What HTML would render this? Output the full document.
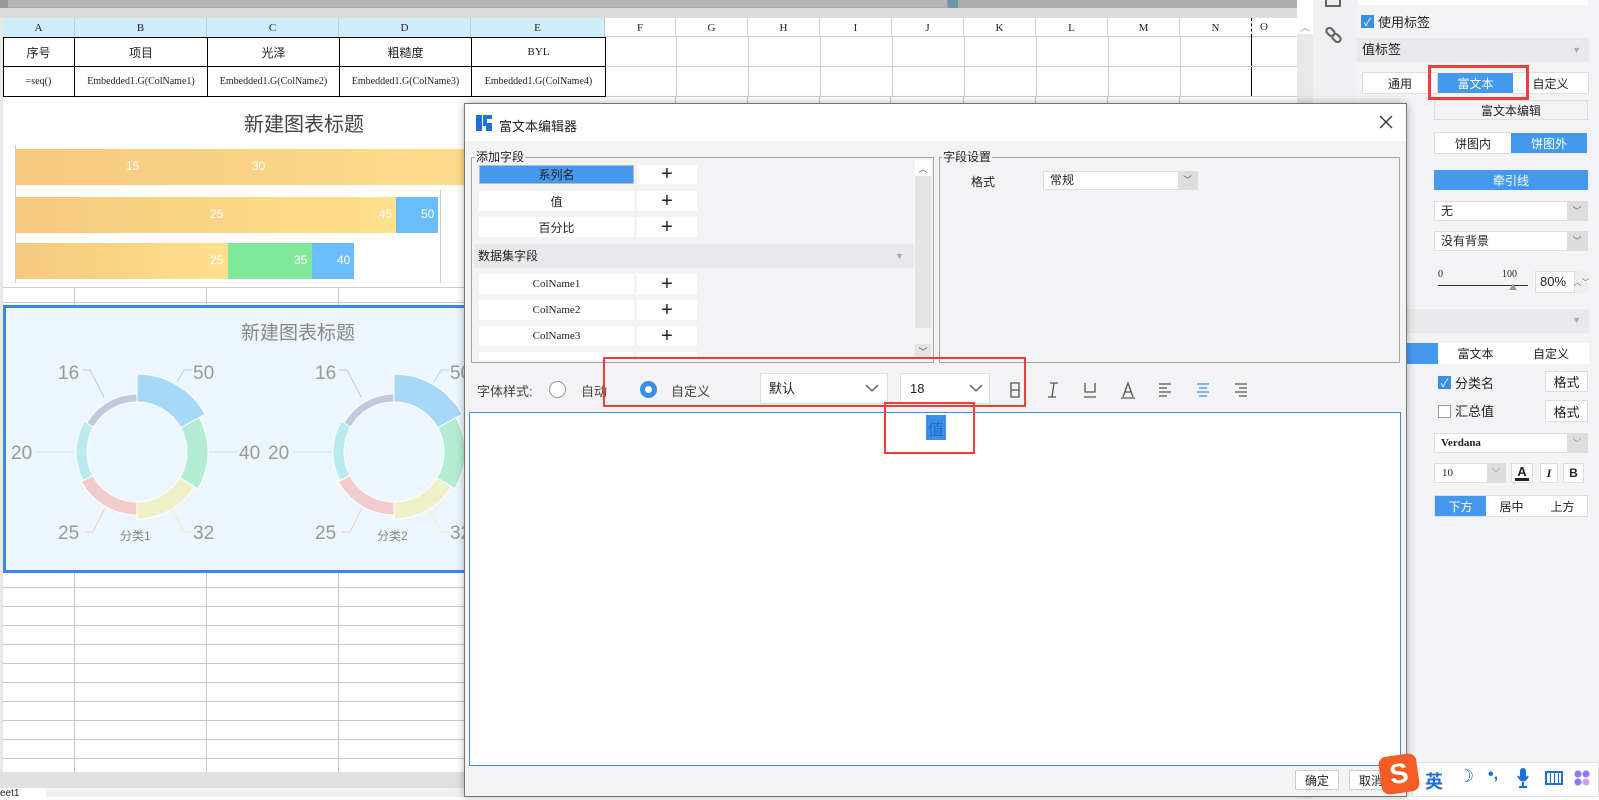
<!DOCTYPE html>
<html><head><meta charset="utf-8"><style>
*{box-sizing:border-box;margin:0;padding:0}
body{width:1599px;height:797px;overflow:hidden;background:#fff;position:relative;font-family:"Liberation Sans","Noto Sans CJK SC",sans-serif;font-size:12px;color:#222}
.a{position:absolute}
.c{display:flex;align-items:center;justify-content:center}
.mono{font-family:"Liberation Serif","Noto Serif CJK SC",serif}
.btn{background:#fff;border:1px solid #ddd}
.blue{background:#4499ee;color:#fff}
</style></head><body>
<div class="a" style="left:0;top:0;width:1297px;height:8px;background:#ababab"></div>
<div class="a" style="left:0;top:0;width:8px;height:8px;background:#999"></div>
<div class="a" style="left:8px;top:0;width:940px;height:7px;background:#b5b5b5;border-right:1px solid #999"></div>
<div class="a" style="left:948px;top:0;width:10px;height:8px;background:#6a9aa8"></div>
<div class="a" style="left:0;top:8px;width:1297px;height:10px;background:#dcdcdc"></div>
<div class="a" style="left:3px;top:96px;width:1294px;height:676px;background-image:repeating-linear-gradient(to bottom,transparent 0 18px,#c8c8c8 18px 19px),linear-gradient(to right,transparent 0 71px,#c8c8c8 71px 72px,transparent 72px 203px,#c8c8c8 203px 204px,transparent 204px 335px,#c8c8c8 335px 336px,transparent 336px 601px,#c8c8c8 601px 602px,transparent 602px 672px,#c8c8c8 672px 673px,transparent 673px 744px,#c8c8c8 744px 745px,transparent 745px 816px,#c8c8c8 816px 817px,transparent 817px 887px,#c8c8c8 887px 888px,transparent 888px 960px,#c8c8c8 960px 961px,transparent 961px 1032px,#c8c8c8 1032px 1033px,transparent 1033px 1104px,#c8c8c8 1104px 1105px,transparent 1105px 1176px,#c8c8c8 1176px 1177px,transparent 1177px);background-position:0 -2px,0 0"></div>
<div class="a" style="left:0;top:18px;width:3px;height:754px;background:#e8e8e8"></div>
<div class="a mono" style="left:3px;top:18px;width:1294px;height:19px;background:#d0eefa;font-size:11px">
<div class="a c" style="left:0;width:72px;height:19px;border-right:1px solid #bcd">A</div>
<div class="a c" style="left:72px;width:132px;height:19px;border-right:1px solid #bcd">B</div>
<div class="a c" style="left:204px;width:132px;height:19px;border-right:1px solid #bcd">C</div>
<div class="a c" style="left:336px;width:132px;height:19px;border-right:1px solid #bcd">D</div>
<div class="a c" style="left:468px;width:134px;height:19px;border-right:1px solid #bcd">E</div>
</div>
<div class="a mono" style="left:605px;top:18px;width:692px;height:19px;background:#fff;font-size:11px;border-bottom:1px solid #ccc">
<div class="a c" style="left:0;width:71px;height:19px;border-right:1px solid #ccc">F</div>
<div class="a c" style="left:71px;width:72px;height:19px;border-right:1px solid #ccc">G</div>
<div class="a c" style="left:143px;width:72px;height:19px;border-right:1px solid #ccc">H</div>
<div class="a c" style="left:215px;width:72px;height:19px;border-right:1px solid #ccc">I</div>
<div class="a c" style="left:287px;width:72px;height:19px;border-right:1px solid #ccc">J</div>
<div class="a c" style="left:359px;width:72px;height:19px;border-right:1px solid #ccc">K</div>
<div class="a c" style="left:431px;width:72px;height:19px;border-right:1px solid #ccc">L</div>
<div class="a c" style="left:503px;width:72px;height:19px;border-right:1px solid #ccc">M</div>
<div class="a c" style="left:575px;width:72px;height:19px;border-right:1px dashed #000">N</div>
<div class="a" style="left:655px;top:3px">O</div>
</div>
<div class="a" style="left:3px;top:37px;width:602px;height:60px;border:1px solid #000;border-right:none;background:#fff"></div>
<div class="a" style="left:3px;top:66px;width:602px;height:1px;background:#000"></div>
<div class="a" style="left:605px;top:37px;width:692px;height:60px;background-image:linear-gradient(to right,transparent 0 71px,#ccc 71px 72px,transparent 72px 143px,#ccc 143px 144px,transparent 144px 215px,#ccc 215px 216px,transparent 216px 287px,#ccc 287px 288px,transparent 288px 359px,#ccc 359px 360px,transparent 360px 431px,#ccc 431px 432px,transparent 432px 503px,#ccc 503px 504px,transparent 504px 575px,#ccc 575px 576px,transparent 576px 646px,#000 646px 647px,transparent 647px);border-bottom:1px solid #ccc"></div>
<div class="a" style="left:605px;top:66px;width:692px;height:1px;background:#ccc"></div>
<div class="a" style="left:74px;top:37px;width:1px;height:60px;background:#000"></div>
<div class="a" style="left:207px;top:37px;width:1px;height:60px;background:#000"></div>
<div class="a" style="left:339px;top:37px;width:1px;height:60px;background:#000"></div>
<div class="a" style="left:471px;top:37px;width:1px;height:60px;background:#000"></div>
<div class="a" style="left:605px;top:37px;width:1px;height:60px;background:#000"></div>
<div class="a c" style="left:3px;top:38px;width:71px;height:28px;font-size:12px">序号</div>
<div class="a c" style="left:75px;top:38px;width:132px;height:28px">项目</div>
<div class="a c" style="left:208px;top:38px;width:131px;height:28px">光泽</div>
<div class="a c" style="left:340px;top:38px;width:131px;height:28px">粗糙度</div>
<div class="a c mono" style="left:472px;top:38px;width:133px;height:28px;font-size:11px">BYL</div>
<div class="a c mono" style="left:3px;top:67px;width:71px;height:29px;font-size:10px">=seq()</div>
<div class="a c mono" style="left:75px;top:67px;width:132px;height:29px;font-size:10px">Embedded1.G(ColName1)</div>
<div class="a c mono" style="left:208px;top:67px;width:131px;height:29px;font-size:10px">Embedded1.G(ColName2)</div>
<div class="a c mono" style="left:340px;top:67px;width:131px;height:29px;font-size:10px">Embedded1.G(ColName3)</div>
<div class="a c mono" style="left:472px;top:67px;width:133px;height:29px;font-size:10px">Embedded1.G(ColName4)</div>
<div class="a" style="left:3px;top:98px;width:602px;height:190px;background:#fff;border-bottom:1px solid #ccc"></div>
<div class="a" style="left:244px;top:108px;font-size:20px;color:#444">新建图表标题</div>
<div class="a" style="left:15px;top:145px;width:1px;height:138px;background:#ccc"></div>
<div class="a" style="left:440px;top:190px;width:1px;height:93px;background:#ccc"></div>
<div class="a" style="left:16px;top:149px;width:460px;height:36px;background:linear-gradient(to right,#f6c97e,#fddc8c)"></div>
<div class="a" style="left:16px;top:197px;width:380px;height:36px;background:linear-gradient(to right,#f6c97e,#fde08c)"></div>
<div class="a" style="left:396px;top:197px;width:42px;height:36px;background:#6cbdfc"></div>
<div class="a" style="left:16px;top:243px;width:212px;height:36px;background:linear-gradient(to right,#f6c97e,#fde08c)"></div>
<div class="a" style="left:228px;top:243px;width:84px;height:36px;background:#80e89b"></div>
<div class="a" style="left:312px;top:243px;width:42px;height:36px;background:#6cbdfc"></div>
<div class="a" style="color:#fff;font-size:12px;left:126px;top:159px">15</div>
<div class="a" style="color:#fff;font-size:12px;left:252px;top:159px">30</div>
<div class="a" style="color:#fff;font-size:12px;left:210px;top:207px">25</div>
<div class="a" style="color:#fff;font-size:12px;left:379px;top:207px">45</div>
<div class="a" style="color:#fff;font-size:12px;left:421px;top:207px">50</div>
<div class="a" style="color:#fff;font-size:12px;left:210px;top:253px">25</div>
<div class="a" style="color:#fff;font-size:12px;left:294px;top:253px">35</div>
<div class="a" style="color:#fff;font-size:12px;left:337px;top:253px">40</div>
<div class="a" style="left:3px;top:305px;width:470px;height:268px;background:#edf5fd;border:3px solid #3b87e8;border-right:none"></div>
<div class="a" style="left:241px;top:318px;font-size:19px;color:#888">新建图表标题</div>
<svg class="a" style="left:0;top:300px" width="470" height="270">
<g transform="translate(137,152)" stroke="#fff" stroke-width="1">
<path d="M0 -78 A78 78 0 0 1 68.2 -37.8 L43.7 -24.2 A50 50 0 0 0 0 -50Z" fill="#a6d8f8"/>
<path d="M62.1 -34.4 A71 71 0 0 1 60.9 36.6 L42.9 25.8 A50 50 0 0 0 43.7 -24.2Z" fill="#b2ecd2"/>
<path d="M57.4 34.5 A67 67 0 0 1 0 67 L0 50 A50 50 0 0 0 42.9 25.8Z" fill="#eef0c8"/>
<path d="M0 63 A63 63 0 0 1 -55.6 29.6 L-44.1 23.5 A50 50 0 0 0 0 50Z" fill="#f0cccc"/>
<path d="M-53.9 28.6 A61 61 0 0 1 -52.8 -30.5 L-43.3 -25 A50 50 0 0 0 -44.1 23.5Z" fill="#b8eaf0"/>
<path d="M-50.2 -29 A58 58 0 0 1 0 -58 L0 -50 A50 50 0 0 0 -43.3 -25Z" fill="#c4c8de"/>
<g fill="none" stroke-width="1">
<path d="M40 -70 L47 -82 L55 -82" stroke="#a6d8f8"/>
<path d="M-33 -55 L-47 -82 L-55 -82" stroke="#c4c8de"/>
<path d="M-63 0 L-100 0" stroke="#b8eaf0"/>
<path d="M72 0 L100 0" stroke="#b2ecd2"/>
<path d="M-32 56 L-44 80 L-52 80" stroke="#f0cccc"/>
<path d="M35 57 L47 80 L55 80" stroke="#eef0c8"/>
</g>
</g>
<g transform="translate(394,152)" stroke="#fff" stroke-width="1">
<path d="M0 -78 A78 78 0 0 1 68.2 -37.8 L43.7 -24.2 A50 50 0 0 0 0 -50Z" fill="#a6d8f8"/>
<path d="M62.1 -34.4 A71 71 0 0 1 60.9 36.6 L42.9 25.8 A50 50 0 0 0 43.7 -24.2Z" fill="#b2ecd2"/>
<path d="M57.4 34.5 A67 67 0 0 1 0 67 L0 50 A50 50 0 0 0 42.9 25.8Z" fill="#eef0c8"/>
<path d="M0 63 A63 63 0 0 1 -55.6 29.6 L-44.1 23.5 A50 50 0 0 0 0 50Z" fill="#f0cccc"/>
<path d="M-53.9 28.6 A61 61 0 0 1 -52.8 -30.5 L-43.3 -25 A50 50 0 0 0 -44.1 23.5Z" fill="#b8eaf0"/>
<path d="M-50.2 -29 A58 58 0 0 1 0 -58 L0 -50 A50 50 0 0 0 -43.3 -25Z" fill="#c4c8de"/>
<g fill="none">
<path d="M40 -70 L47 -82 L55 -82" stroke="#a6d8f8"/>
<path d="M-33 -55 L-47 -82 L-55 -82" stroke="#c4c8de"/>
<path d="M-63 0 L-100 0" stroke="#b8eaf0"/>
<path d="M-32 56 L-44 80 L-52 80" stroke="#f0cccc"/>
<path d="M35 57 L47 80 L55 80" stroke="#eef0c8"/>
</g>
</g>
<g fill="#999" font-size="19" font-family="Liberation Sans,sans-serif">
<text x="58" y="79">16</text><text x="193" y="79">50</text><text x="11" y="159">20</text><text x="239" y="159">40</text><text x="58" y="239">25</text><text x="193" y="239">32</text>
<text x="315" y="79">16</text><text x="450" y="79">50</text><text x="268" y="159">20</text><text x="315" y="239">25</text><text x="450" y="239">32</text>
</g>
<g fill="#888" font-size="12" font-family="Liberation Sans,Noto Sans CJK SC,sans-serif"><text x="120" y="240">分类1</text><text x="377" y="240">分类2</text></g>
</svg>
<div class="a" style="left:0;top:772px;width:1297px;height:16px;background:#e0e0e0"></div>
<div class="a" style="left:0;top:788px;width:1297px;height:9px;background:#f0f0f0"></div>
<div class="a" style="left:0;top:788px;width:46px;height:9px;background:#fff;font-size:10px;line-height:12px">eet1</div>
<div class="a" style="left:1297px;top:18px;width:16px;height:780px;background:#e8e8e8"></div>
<div class="a c" style="left:1297px;top:18px;width:16px;height:16px;background:#fff;color:#888;font-size:10px">︿</div>
<div class="a" style="left:1313px;top:0;width:44px;height:797px;background:#f0f0f2"></div>
<div class="a" style="left:1325px;top:0;width:16px;height:7px;border:2px solid #666;border-top:none"></div>
<svg class="a" style="left:1325px;top:26px" width="18" height="18"><g fill="none" stroke="#666" stroke-width="2.2"><rect x="1" y="3" width="9" height="6" rx="3" transform="rotate(45 5.5 6)"/><rect x="7" y="9" width="9" height="6" rx="3" transform="rotate(45 11.5 12)"/></g></svg>
<div class="a" style="left:1357px;top:0;width:242px;height:797px;background:#f3f3f5"></div>
<div class="a" style="left:1358px;top:0;width:230px;height:5px;background:#fff"></div>
<div class="a c" style="left:1361px;top:15px;width:13px;height:13px;background:#3a8ee6;color:#fff;font-size:11px">✓</div>
<div class="a" style="left:1378px;top:12px;font-size:13px">使用标签</div>
<div class="a" style="left:1357px;top:38px;width:232px;height:24px;background:#e9e9eb;font-size:13px;line-height:24px;padding-left:5px">值标签<span style="position:absolute;right:8px;color:#aaa;font-size:9px">▼</span></div>
<div class="a c btn" style="left:1362px;top:72px;width:76px;height:22px;font-size:12px">通用</div>
<div class="a c blue" style="left:1438px;top:73px;width:75px;height:20px;font-size:12px">富文本</div>
<div class="a c btn" style="left:1513px;top:72px;width:76px;height:22px;font-size:12px;border-left:none">自定义</div>
<div class="a" style="left:1428px;top:65px;width:101px;height:35px;border:3px solid #f03c3c"></div>
<div class="a c btn" style="left:1434px;top:100px;width:154px;height:20px;background:#f3f3f5">富文本编辑</div>
<div class="a c btn" style="left:1434px;top:132px;width:78px;height:22px">饼图内</div>
<div class="a c blue" style="left:1511px;top:133px;width:76px;height:20px">饼图外</div>
<div class="a c blue" style="left:1434px;top:170px;width:154px;height:20px">牵引线</div>
<div class="a btn" style="left:1434px;top:201px;width:154px;height:20px;padding-left:6px;line-height:18px">无<span class="a c" style="right:0;top:0;width:20px;height:18px;background:#ddd;color:#666;font-size:9px">﹀</span></div>
<div class="a btn" style="left:1434px;top:231px;width:154px;height:20px;padding-left:6px;line-height:18px">没有背景<span class="a c" style="right:0;top:0;width:20px;height:18px;background:#ddd;color:#666;font-size:9px">﹀</span></div>
<div class="a mono" style="left:1438px;top:269px;font-size:10px">0</div>
<div class="a mono" style="left:1502px;top:269px;font-size:10px">100</div>
<div class="a" style="left:1438px;top:285px;width:90px;height:1px;background:#333"></div>
<div class="a" style="left:1509px;top:280px;width:0;height:0;border:4px solid transparent;border-bottom:6px solid #999"></div>
<div class="a btn" style="left:1535px;top:271px;width:40px;height:22px;font-size:13px;padding-left:4px;line-height:20px">80%</div>
<div class="a c" style="left:1575px;top:271px;width:13px;height:22px;font-size:8px;color:#666;background:#eee;flex-direction:column">︿﹀</div>
<div class="a" style="left:1357px;top:309px;width:232px;height:24px;background:#e9e9eb"><span style="position:absolute;right:8px;top:6px;color:#aaa;font-size:9px">▼</span></div>
<div class="a blue" style="left:1407px;top:343px;width:31px;height:21px"></div>
<div class="a c" style="left:1438px;top:343px;width:75px;height:21px;background:#fff">富文本</div>
<div class="a c" style="left:1513px;top:343px;width:76px;height:21px;background:#fff">自定义</div>
<div class="a c" style="left:1438px;top:376px;width:13px;height:13px;background:#3a8ee6;color:#fff;font-size:11px">✓</div>
<div class="a" style="left:1455px;top:373px;font-size:13px">分类名</div>
<div class="a c btn" style="left:1545px;top:371px;width:43px;height:21px;font-size:13px">格式</div>
<div class="a" style="left:1438px;top:405px;width:13px;height:13px;border:1px solid #999;background:#fff"></div>
<div class="a" style="left:1455px;top:401px;font-size:13px">汇总值</div>
<div class="a c btn" style="left:1545px;top:400px;width:43px;height:22px;font-size:13px">格式</div>
<div class="a btn mono" style="left:1434px;top:433px;width:154px;height:20px;padding-left:6px;line-height:18px;font-size:11px;font-weight:bold">Verdana<span class="a c" style="right:0;top:0;width:20px;height:18px;background:#ddd;color:#666;font-size:9px;font-weight:normal">﹀</span></div>
<div class="a btn mono" style="left:1434px;top:463px;width:72px;height:20px;padding-left:7px;line-height:18px;font-size:11px">10<span class="a c" style="right:0;top:0;width:18px;height:18px;background:#ddd;color:#666;font-size:9px">﹀</span></div>
<div class="a c btn" style="left:1511px;top:463px;width:22px;height:20px;font-weight:bold;font-size:13px;flex-direction:column;line-height:12px">A<span style="width:14px;height:3px;background:#222"></span></div>
<div class="a c btn" style="left:1540px;top:463px;width:18px;height:20px;font-style:italic;font-family:'Liberation Serif';font-weight:bold">I</div>
<div class="a c btn" style="left:1563px;top:463px;width:21px;height:20px;font-weight:bold">B</div>
<div class="a" style="left:1434px;top:495px;width:154px;height:22px;background:#fff;border:1px solid #ddd"></div>
<div class="a c blue" style="left:1435px;top:496px;width:51px;height:20px">下方</div>
<div class="a c" style="left:1486px;top:496px;width:51px;height:20px">居中</div>
<div class="a c" style="left:1537px;top:496px;width:51px;height:20px">上方</div>
<div class="a" style="left:464px;top:103px;width:943px;height:694px;background:#f3f3f5;border:1px solid #777;box-shadow:0 0 8px rgba(0,0,0,.3)"></div>
<div class="a" style="left:465px;top:104px;width:941px;height:37px;background:#fff"></div>
<svg class="a" style="left:476px;top:114px" width="16" height="17"><path d="M0 1 H6 V17 H0Z M7 1 H16 V5 H11 V9 H16 V17 H10 V12 H7Z" fill="#1a73d9"/></svg>
<div class="a" style="left:499px;top:116px;font-size:13px">富文本编辑器</div>
<svg class="a" style="left:1379px;top:115px" width="14" height="14"><path d="M1 1L13 13M13 1L1 13" stroke="#333" stroke-width="1.3"/></svg>
<div class="a" style="left:471px;top:157px;width:463px;height:206px;border:1px solid #aaa59a"></div>
<div class="a" style="left:475px;top:148px;background:#f3f3f5;font-size:12px;padding:0 1px">添加字段</div>
<div class="a c" style="left:479px;top:165px;width:155px;height:19px;background:#4499ee;border:1px solid #bbb;font-size:12px">系列名</div>
<div class="a c" style="left:479px;top:191px;width:155px;height:20px;background:#fff">值</div>
<div class="a c" style="left:479px;top:217px;width:155px;height:20px;background:#fff">百分比</div>
<div class="a" style="left:474px;top:244px;width:440px;height:24px;background:#e9e9eb;padding-left:4px;line-height:24px">数据集字段<span style="position:absolute;right:10px;color:#aaa;font-size:9px">▼</span></div>
<div class="a c mono" style="left:479px;top:274px;width:155px;height:20px;background:#fff;font-size:11px">ColName1</div>
<div class="a c mono" style="left:479px;top:300px;width:155px;height:20px;background:#fff;font-size:11px">ColName2</div>
<div class="a c mono" style="left:479px;top:326px;width:155px;height:20px;background:#fff;font-size:11px">ColName3</div>
<div class="a" style="left:479px;top:352px;width:155px;height:8px;background:#fff"></div>
<div class="a" style="left:637px;top:352px;width:60px;height:8px;background:#fff"></div>
<div class="a c" style="left:637px;top:165px;width:60px;height:19px;background:#fff;font-size:20px">+</div>
<div class="a c" style="left:637px;top:191px;width:60px;height:20px;background:#fff;font-size:20px">+</div>
<div class="a c" style="left:637px;top:217px;width:60px;height:20px;background:#fff;font-size:20px">+</div>
<div class="a c" style="left:637px;top:274px;width:60px;height:20px;background:#fff;font-size:20px">+</div>
<div class="a c" style="left:637px;top:300px;width:60px;height:20px;background:#fff;font-size:20px">+</div>
<div class="a c" style="left:637px;top:326px;width:60px;height:20px;background:#fff;font-size:20px">+</div>
<div class="a" style="left:915px;top:160px;width:16px;height:198px;background:#e4e4e4"></div>
<div class="a c" style="left:915px;top:160px;width:16px;height:16px;background:#fff;font-size:9px;color:#555">︿</div>
<div class="a" style="left:915px;top:328px;width:16px;height:16px;background:#f3f3f0"></div>
<div class="a c" style="left:915px;top:344px;width:16px;height:14px;font-size:9px;color:#555">﹀</div>
<div class="a" style="left:939px;top:157px;width:461px;height:206px;border:1px solid #aaa59a"></div>
<div class="a" style="left:942px;top:148px;background:#f3f3f5;font-size:12px;padding:0 1px">字段设置</div>
<div class="a" style="left:971px;top:173px">格式</div>
<div class="a btn" style="left:1043px;top:171px;width:155px;height:19px;padding-left:6px;line-height:17px">常规<span class="a c" style="right:0;top:0;width:19px;height:17px;background:#ddd;color:#666;font-size:9px">﹀</span></div>
<div class="a" style="left:477px;top:381px;font-size:13px;color:#444">字体样式:</div>
<div class="a" style="left:549px;top:381px;width:17px;height:17px;border:1px solid #999;border-radius:50%;background:#fff"></div>
<div class="a" style="left:581px;top:381px;font-size:13px;color:#444">自动</div>
<div class="a" style="left:640px;top:381px;width:17px;height:17px;border-radius:50%;border:5px solid #3a8ee6;background:#fff"></div>
<div class="a" style="left:671px;top:381px;font-size:13px;color:#444">自定义</div>
<div class="a" style="left:760px;top:373px;width:128px;height:31px;background:#fff;border:1px solid #ddd;padding-left:8px;line-height:29px;font-size:13px">默认<svg class="a" style="right:8px;top:10px" width="14" height="9"><path d="M1 1L7 7L13 1" fill="none" stroke="#555" stroke-width="1.3"/></svg></div>
<div class="a" style="left:900px;top:373px;width:90px;height:31px;background:#fff;border:1px solid #ddd;padding-left:9px;line-height:29px;font-size:13px">18<svg class="a" style="right:6px;top:10px" width="14" height="9"><path d="M1 1L7 7L13 1" fill="none" stroke="#555" stroke-width="1.3"/></svg></div>
<svg class="a" style="left:1008px;top:381px" width="245" height="18" fill="none" stroke="#555" stroke-width="1.3">
<path d="M3 2H11V16H3Z M3 9H11"/>
<path d="M42 2H50 M40 16H48 M46 2L44 16"/>
<path d="M77 2V11H87V2 M76 16H88"/>
<path d="M115 16L120 2L125 16 M116 11H124 M113 17H127"/>
<path d="M151 3H163 M151 7H159 M151 11H163 M151 15H159"/>
<path d="M189 3H201 M191 7H199 M189 11H201 M191 15H199" stroke="#3a8ee6"/>
<path d="M227 3H239 M231 7H239 M227 11H239 M231 15H239"/>
</svg>
<div class="a" style="left:603px;top:357px;width:423px;height:50px;border:2px solid #f03c3c"></div>
<div class="a" style="left:469px;top:412px;width:932px;height:354px;background:#fff;border:1px solid #3a8ee6"></div>
<div class="a c" style="left:926px;top:415px;width:20px;height:25px;background:#3a8ee6;color:#1e6fd0;font-size:16px">值</div>
<div class="a" style="left:884px;top:402px;width:91px;height:52px;border:2px solid #f03c3c"></div>
<div class="a c btn" style="left:1295px;top:770px;width:44px;height:20px;border-color:#ccc">确定</div>
<div class="a c btn" style="left:1349px;top:770px;width:44px;height:20px;border-color:#ccc">取消</div>
<div class="a" style="left:1412px;top:762px;width:187px;height:35px;background:#fff;border:1px solid #e0e0e0"></div>
<div class="a c" style="left:1380px;top:755px;width:38px;height:38px;background:#f35d25;color:#fff;font-weight:bold;font-size:28px;border-radius:8px;transform:rotate(-8deg)">S</div>
<div class="a" style="left:1425px;top:768px;color:#1a6fd8;font-size:18px;font-weight:bold">英</div>
<div class="a" style="left:1458px;top:766px;color:#1a6fd8;font-size:18px">☽</div>
<div class="a" style="left:1488px;top:766px;color:#1a6fd8;font-size:16px;font-weight:bold">•,</div>
<svg class="a" style="left:1516px;top:767px" width="14" height="22"><rect x="4" y="1" width="6" height="12" rx="3" fill="#1a6fd8"/><path d="M2 9Q7 18 12 9 M7 15V20 M3 20H11" fill="none" stroke="#1a6fd8" stroke-width="2"/></svg>
<div class="a" style="left:1545px;top:771px;width:18px;height:14px;border:2px solid #1a6fd8;background:repeating-linear-gradient(to right,#fff 0 3px,#1a6fd8 3px 4px)"></div>
<div class="a" style="left:1574px;top:770px;width:16px;height:16px;background:radial-gradient(circle at 25% 25%,#8a7af0 3px,transparent 4px),radial-gradient(circle at 75% 25%,#8a7af0 3px,transparent 4px),radial-gradient(circle at 25% 75%,#8a7af0 3px,transparent 4px),radial-gradient(circle at 75% 75%,#c6a0f8 3px,transparent 4px)"></div>
</body></html>
